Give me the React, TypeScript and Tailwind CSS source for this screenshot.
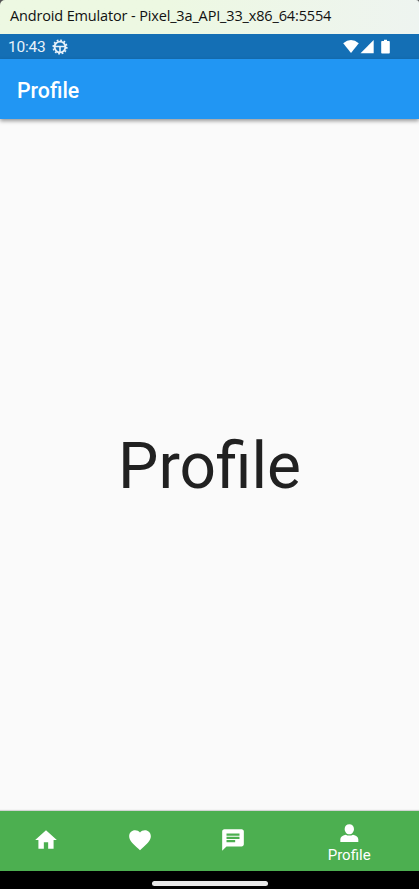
const icons = {
  home: "M10 20v-6h4v6h5v-8h3L12 3 2 12h3v8z",
  heart:
    "M12 21.35l-1.45-1.32C5.4 15.36 2 12.28 2 8.5 2 5.42 4.42 3 7.5 3c1.74 0 3.41.81 4.5 2.09C13.09 3.81 14.76 3 16.5 3 19.58 3 22 5.42 22 8.5c0 3.78-3.4 6.86-8.55 11.54L12 21.35z",
  chat: "M20 2H4c-1.1 0-1.99.9-1.99 2L2 22l4-4h14c1.1 0 2-.9 2-2V4c0-1.1-.9-2-2-2zM6 9h12v2H6V9zm8 5H6v-2h8v2zm4-6H6V6h12v2z",
  person:
    "M12.3 3.9c-2.5 0-4.3 1.9-4.3 4.3s1.8 5 4.3 5 4.3-2.6 4.3-5-1.8-4.3-4.3-4.3zM4 20.2v-2.4c0-2.2 1.8-3.7 4.9-4.3 2 1.2 4.8 1.2 6.8 0 3.1.6 4.9 2.1 4.9 4.3v2.4z",
};

function Icon({ path }: { path: string }) {
  return (
    <svg viewBox="0 0 24 24" fill="currentColor" className="size-[26px] shrink-0">
      <path d={path} />
    </svg>
  );
}

function StatusBar() {
  return (
    <div className="flex h-[25px] shrink-0 items-center bg-[#146fb5] pl-2 pr-7 text-[#e8f2fa]">
      <span className="mt-0.5 text-[15.5px] leading-[25px] tracking-[-0.2px]">10:43</span>
      <svg viewBox="0 0 16 16" className="ml-1.5 size-4" fill="none" stroke="currentColor">
        <circle cx="8" cy="8" r="5.4" strokeWidth="1.9" />
        <circle cx="8" cy="8" r="6.8" strokeWidth="1.6" strokeDasharray="1.8 1.76" />
        <path d="M3 7.5h10M8 7.5V13" strokeWidth="1.6" />
      </svg>
      <svg viewBox="0 0 48 16" className="ml-auto h-4 w-12 text-white" fill="currentColor">
        <path d="M.2 4.2Q8-2.2 15.8 4.2L8 14z" />
        <path d="M30.7 1v13.3H17.5z" />
        <path d="M41 .8h3v1.3h2q.8 0 .8.8v10.9q0 .8-.8.8h-7q-.8 0-.8-.8V2.9q0-.8.8-.8h2z" />
      </svg>
    </div>
  );
}

export default function App() {
  return (
    <div className="flex h-[889px] w-[419px] flex-col overflow-hidden bg-[#fafafa] font-[Roboto,sans-serif]">
      <div className="shrink-0 bg-[#555]">
        <div className="flex h-[34px] items-center rounded-tl-[5px] rounded-tr-[3px] bg-linear-to-r from-[#edf8e2] from-40% to-[#eef4f0] pl-2.5 font-['Open_Sans',sans-serif] text-[14.5px] text-[#111]">
          <span className="-mt-0.5 whitespace-nowrap tracking-[-0.15px]">
            Android Emulator - Pixel_3a_API_33_x86_64:5554
          </span>
        </div>
      </div>
      <StatusBar />
      <header className="z-10 flex h-[60px] shrink-0 items-center bg-[#2196f3] pl-[17px] shadow-[0_2px_4px_rgba(0,0,0,0.4)]">
        <h1 className="mt-[3px] text-[21.3px] font-medium text-white">Profile</h1>
      </header>
      <main className="flex flex-1 items-center justify-center pt-[3px] text-[64px] text-[#212121]">
        <span>Profile</span>
      </main>
      <nav className="grid h-[60px] shrink-0 grid-cols-[2fr_2fr_2fr_3fr] bg-[#4caf50] text-white shadow-[0_-1px_1px_rgba(0,0,0,0.15)]">
        <button className="flex items-center justify-center pb-0.5 pr-px"><Icon path={icons.home} /></button>
        <button className="flex items-center justify-center pb-0.5"><Icon path={icons.heart} /></button>
        <button className="flex items-center justify-center pb-0.5"><Icon path={icons.chat} /></button>
        <button className="flex flex-col items-center pt-[9px]">
          <Icon path={icons.person} />
          <span className="text-[15px] leading-[18px]">Profile</span>
        </button>
      </nav>
      <div className="flex h-[18px] shrink-0 justify-center bg-black pt-[10px]">
        <div className="h-[5px] w-[116px] rounded-full bg-[#e8e8e8]" />
      </div>
    </div>
  );
}
